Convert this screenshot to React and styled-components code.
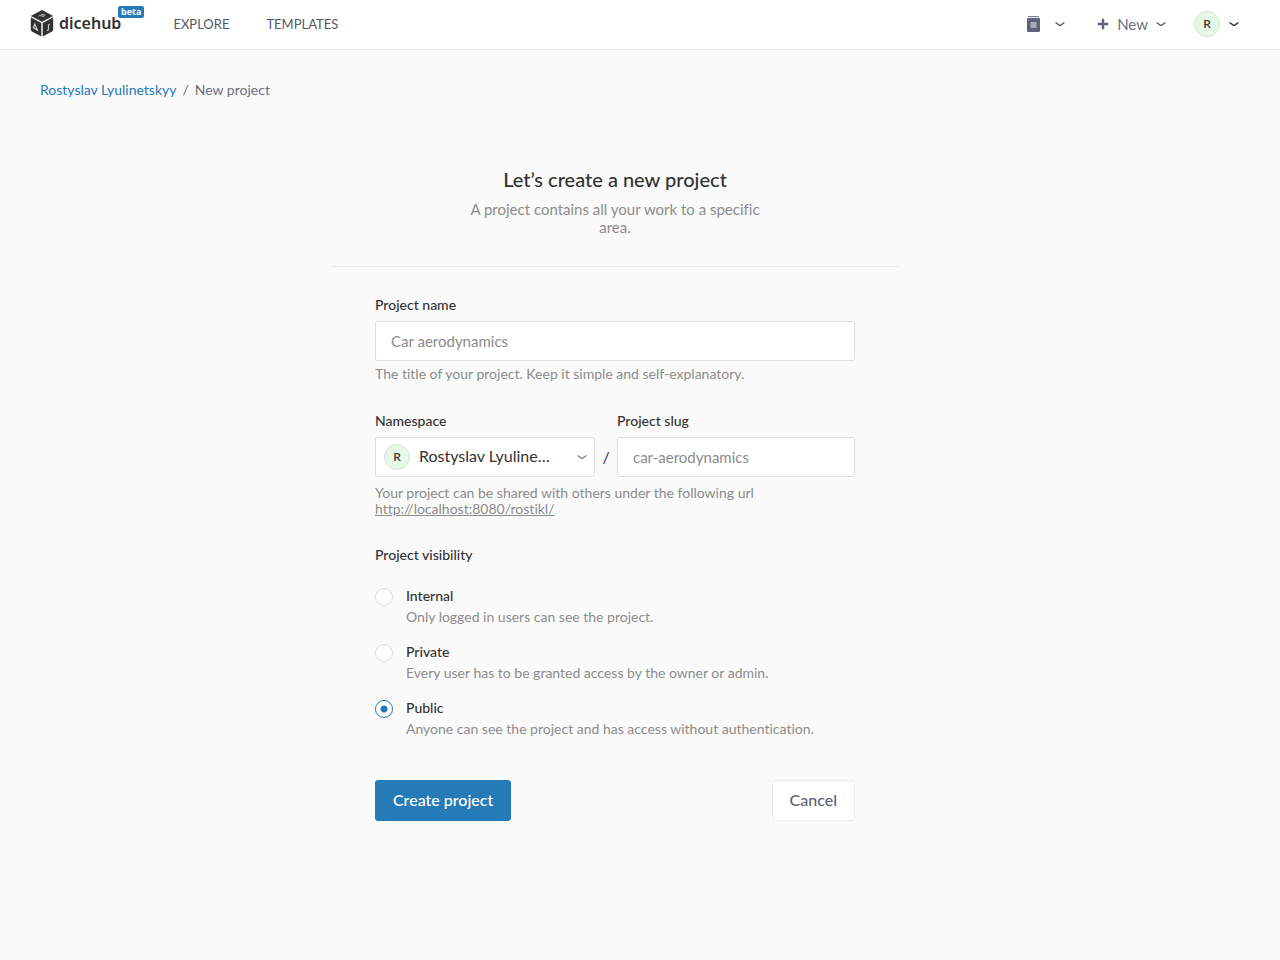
import React, { useState } from "react";
import styled, { createGlobalStyle } from "styled-components";

const options = [
  { id: "internal", title: "Internal", text: "Only logged in users can see the project." },
  { id: "private", title: "Private", text: "Every user has to be granted access by the owner or admin." },
  { id: "public", title: "Public", text: "Anyone can see the project and has access without authentication." },
];

function Chevron({ color }) {
  return (
    <svg width="10" height="6" viewBox="0 0 10 6" fill="none" aria-hidden="true">
      <path
        d="M1 1.8 3.8 3.9Q5 4.7 6.2 3.9L9 1.8"
        stroke={color}
        strokeWidth="1.4"
        strokeLinecap="round"
      />
    </svg>
  );
}

function DiceIcon() {
  return (
    <svg width="24" height="27" viewBox="0 0 24 27" fill="#333" aria-hidden="true">
      <path d="M12 0.3 22.6 5.9 12 11.6 1.4 5.9Z" stroke="#333" strokeWidth="0.6" strokeLinejoin="round" />
      <path d="M0.8 7.3 11.3 13V26.4L1.9 21.4Q0.8 20.8 0.8 19.6Z" />
      <path d="M23.2 7.3 12.7 13V26.4L22.1 21.4Q23.2 20.8 23.2 19.6Z" />
      <path d="M8.6 6.2C9.4 5.3 10.4 5.3 11.4 5.9S13.8 6.4 15.2 5.2M11 4.8 14.4 4.6" fill="none" stroke="#ccc" strokeWidth="1" />
      <path d="M3.4 17.8 4.8 14 7.4 20.2Z" fill="none" stroke="#ddd" strokeWidth="1.1" />
      <path d="M19.8 14.2C18.3 14 18.5 16 18.5 17.6S18.4 20.6 17 20.5" fill="none" stroke="#ccc" strokeWidth="1.1" />
    </svg>
  );
}

function App() {
  const [visibility, setVisibility] = useState("public");
  const [name, setName] = useState("");
  const [slug, setSlug] = useState("");

  return (
    <>
      <GlobalStyle />
      <Header>
        <Logo href="#">
          <DiceIcon />
          <LogoText>dicehub</LogoText>
          <Beta>beta</Beta>
        </Logo>
        <Nav>
          <a href="#explore">EXPLORE</a>
          <a href="#templates">TEMPLATES</a>
        </Nav>
        <Tools>
          <ToolButton type="button" aria-label="Projects" $gap={15}>
            <svg width="13" height="16" viewBox="0 0 13 16" aria-hidden="true">
              <path d="M1 0.6H12" stroke="#7b7e92" strokeWidth="1.2" />
              <rect y="2" width="13" height="14" rx="1.2" fill="#5f6279" />
              <rect x="3.5" y="6" width="6" height="6" fill="#a9abb8" />
            </svg>
            <Chevron color="#5f6279" />
          </ToolButton>
          <ToolButton type="button" $gap={8}>
            <svg width="12" height="12" viewBox="0 0 12 12" aria-hidden="true">
              <path d="M6 0.8V11.2M0.8 6H11.2" stroke="#5f6279" strokeWidth="2.4" />
            </svg>
            New
            <Chevron color="#5f6279" />
          </ToolButton>
          <ToolButton type="button" aria-label="Account" $gap={9}>
            <Avatar>R</Avatar>
            <Chevron color="#333" />
          </ToolButton>
        </Tools>
      </Header>

      <Main>
        <Breadcrumbs aria-label="Breadcrumb">
          <a href="#user">Rostyslav Lyulinetskyy</a>
          <span>/</span>
          <span>New project</span>
        </Breadcrumbs>

        <Intro>
          <h1>Let’s create a new project</h1>
          <p>A project contains all your work to a specific area.</p>
        </Intro>

        <Form onSubmit={(e) => e.preventDefault()}>
          <Label htmlFor="name">Project name</Label>
          <Input
            id="name"
            type="text"
            placeholder="Car aerodynamics"
            value={name}
            onChange={(e) => setName(e.target.value)}
          />
          <Help $top={5}>The title of your project. Keep it simple and self-explanatory.</Help>

          <PathRow>
            <div>
              <Label htmlFor="namespace">Namespace</Label>
              <SelectBox>
                <Avatar>R</Avatar>
                <select id="namespace">
                  <option>Rostyslav Lyulinetskyy</option>
                </select>
                <Chevron color="#8c8c8c" />
              </SelectBox>
            </div>
            <Slash>/</Slash>
            <div>
              <Label htmlFor="slug">Project slug</Label>
              <Input
                id="slug"
                type="text"
                placeholder="car-aerodynamics"
                value={slug}
                onChange={(e) => setSlug(e.target.value)}
              />
            </div>
          </PathRow>
          <Help $top={8}>
            Your project can be shared with others under the following url
            <br />
            <a href="#url">http://localhost:8080/rostikl/</a>
          </Help>

          <Visibility>
            <legend>Project visibility</legend>
            {options.map((o) => (
              <Option key={o.id}>
                <input
                  type="radio"
                  name="visibility"
                  checked={visibility === o.id}
                  onChange={() => setVisibility(o.id)}
                />
                <span>
                  <strong>{o.title}</strong>
                  <small>{o.text}</small>
                </span>
              </Option>
            ))}
          </Visibility>

          <Actions>
            <Button type="submit" $primary>
              Create project
            </Button>
            <Button type="button">Cancel</Button>
          </Actions>
        </Form>
      </Main>
    </>
  );
}

export default App;

const GlobalStyle = createGlobalStyle`
  * {
    box-sizing: border-box;
  }
  body {
    margin: 0;
    background: #fafafa;
    color: #333;
    font-family: Lato, "Open Sans", sans-serif;
    font-size: 14px;
    font-variant-ligatures: none;
  }
  button, input, select {
    font-family: inherit;
  }
`;

const Header = styled.header`
  display: flex;
  align-items: center;
  height: 50px;
  padding: 0 41px 2px 30px;
  background: #fff;
  border-bottom: 1px solid #ebebeb;
`;

const Logo = styled.a`
  position: relative;
  display: flex;
  align-items: center;
  gap: 5px;
  color: #333;
  text-decoration: none;
`;

const LogoText = styled.span`
  padding-bottom: 2px;
  font: 600 16px/20px "Noto Sans", sans-serif;
`;

const Beta = styled.span`
  position: absolute;
  top: -4px;
  left: 88px;
  padding: 0 3px;
  border-radius: 2px;
  background: #257ab8;
  color: #fff;
  font: 700 9px/12px "Open Sans", sans-serif;
`;

const Nav = styled.nav`
  display: flex;
  gap: 37px;
  margin-left: 52px;

  a {
    color: #555768;
    font-size: 13px;
    text-decoration: none;
  }
`;

const Tools = styled.div`
  display: flex;
  align-items: center;
  gap: 28px;
  margin-left: auto;

  button:first-child {
    margin-right: 4px;
  }
`;

const ToolButton = styled.button`
  display: flex;
  align-items: center;
  gap: ${(props) => props.$gap}px;
  padding: 0;
  border: 0;
  background: none;
  color: #6b6e82;
  font-size: 15px;
  cursor: pointer;
`;

const Avatar = styled.span`
  flex: none;
  width: 26px;
  height: 26px;
  border: 1px solid #dcdfdc;
  border-radius: 50%;
  background: #e7f8e7;
  color: #333;
  font-size: 12px;
  font-weight: 600;
  line-height: 24px;
  text-align: center;
`;

const Main = styled.main`
  padding: 31px 90px 40px 40px;
`;

const Breadcrumbs = styled.nav`
  display: flex;
  gap: 6px;
  color: #6d6f7b;
  font-size: 14px;
  line-height: 18px;

  a {
    color: #257ab8;
    text-decoration: none;
  }
`;

const Intro = styled.section`
  max-width: 568px;
  margin: 68px auto 29px;
  padding-bottom: 30px;
  border-bottom: 1px solid #ebebeb;
  text-align: center;

  h1 {
    margin: 0 0 9px;
    font-size: 20px;
    font-weight: 500;
    line-height: 24px;
  }
  p {
    max-width: 300px;
    margin: 0 auto;
    color: #8c8c8c;
    font-size: 15px;
    line-height: 18px;
  }
`;

const Form = styled.form`
  max-width: 480px;
  margin: 0 auto;
`;

const Label = styled.label`
  display: block;
  margin-bottom: 7px;
  font-size: 14px;
  font-weight: 500;
  line-height: 18px;
`;

const Input = styled.input`
  display: block;
  width: 100%;
  height: 40px;
  padding: 0 15px;
  border: 1px solid #dedede;
  border-radius: 2px;
  background: #fff;
  font-size: 15px;

  &::placeholder {
    color: #8c8c8c;
  }
`;

const Help = styled.p`
  margin: ${(props) => props.$top}px 0 0;
  color: #8c8c8c;
  font-size: 14px;
  line-height: 16px;

  a {
    color: inherit;
  }
`;

const PathRow = styled.div`
  display: grid;
  grid-template-columns: 220px 22px 1fr;
  align-items: end;
  margin-top: 30px;
`;

const SelectBox = styled.div`
  display: flex;
  align-items: center;
  height: 40px;
  padding: 0 7px 0 8px;
  border: 1px solid #dedede;
  border-radius: 2px;
  background: #fff;

  select {
    flex: 1;
    min-width: 0;
    margin: 0 25px 2px 9px;
    padding: 0;
    border: 0;
    appearance: none;
    background: none;
    color: #333;
    font-size: 16px;
    line-height: 22px;
    text-overflow: ellipsis;
  }
`;

const Slash = styled.span`
  font-size: 16px;
  line-height: 40px;
  text-align: center;
`;

const Visibility = styled.fieldset`
  margin: 29px 0 0;
  padding: 0;
  border: 0;

  legend {
    margin-bottom: 23px;
    padding: 0;
    font-weight: 500;
    line-height: 18px;
  }
`;

const Option = styled.label`
  display: flex;
  gap: 13px;
  height: 56px;
  cursor: pointer;

  input {
    flex: none;
    width: 18px;
    height: 18px;
    margin: 1px 0 0;
    border: 1px solid #dedede;
    border-radius: 50%;
    appearance: none;
    background: #fff;
  }
  input:checked {
    border-color: #257ab8;
    background: radial-gradient(circle, #257ab8 3px, #fff 4px);
  }
  strong,
  small {
    display: block;
    font-size: 14px;
    line-height: 18px;
  }
  strong {
    font-weight: 500;
  }
  small {
    margin-top: 3px;
    color: #8c8c8c;
  }
`;

const Actions = styled.div`
  display: flex;
  justify-content: space-between;
  margin-top: 25px;
`;

const Button = styled.button`
  height: 41px;
  padding: 0 17px 3px;
  border: 1px solid ${(props) => (props.$primary ? "#257ab8" : "#ebebeb")};
  border-radius: 3px;
  background: ${(props) => (props.$primary ? "#257ab8" : "#fff")};
  color: ${(props) => (props.$primary ? "#fff" : "#5f6279")};
  font-size: 16px;
  font-weight: 500;
  cursor: pointer;
`;
